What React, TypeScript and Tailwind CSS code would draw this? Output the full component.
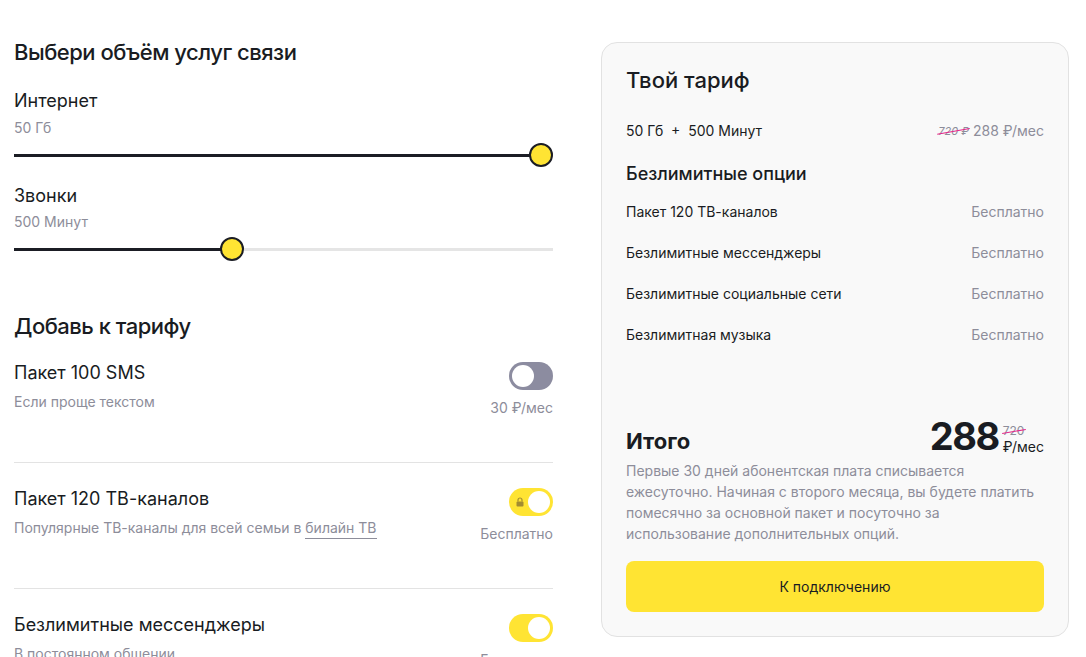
import React from "react";

const GRAY = "text-[#8d8d9a]";

function Slider({ pct }: { pct: number }) {
  return (
    <div className="relative h-6 w-full">
      <div className="absolute left-0 right-0 top-[11px] h-[3px] bg-[#e5e5e5]" />
      <div
        className="absolute left-0 top-[10.5px] h-[3px] bg-[#1b1d24]"
        style={{ width: `${pct}%` }}
      />
      <div
        className="absolute top-0 h-6 w-6 -translate-x-1/2 rounded-full border-2 border-[#1b1d24] bg-[#ffe433]"
        style={{ left: `${pct}%` }}
      />
    </div>
  );
}

function Lock() {
  return (
    <svg width="8" height="10" viewBox="0 0 8 10">
      <path d="M2 4.5V3a2 2 0 0 1 4 0v1.5" fill="none" stroke="#a38c30" strokeWidth="1.2" />
      <rect x="0.5" y="4.5" width="7" height="5" rx="1" fill="#a38c30" />
    </svg>
  );
}

function Toggle({ on, locked }: { on: boolean; locked?: boolean }) {
  return (
    <div
      className={`flex h-[28px] w-[44px] items-center rounded-full px-[3px] ${
        on ? "justify-end bg-[#ffe433]" : "justify-start bg-[#8c8ca0]"
      } relative`}
    >
      {locked && (
        <div className="absolute left-[7px] top-[9px] flex">
          <Lock />
        </div>
      )}
      <div className="h-[22px] w-[22px] rounded-full bg-white" />
    </div>
  );
}

function Item({
  title,
  sub,
  price,
  on,
  locked,
  last,
}: {
  title: string;
  sub: React.ReactNode;
  price: string;
  on: boolean;
  locked?: boolean;
  last?: boolean;
}) {
  return (
    <div className={`flex h-[126px] justify-between pt-[24px] ${last ? "" : "border-b border-[#e3e3e3]"}`}>
      <div className="flex flex-col">
        <div className="text-[18px] leading-[24px] text-[#191c22]">{title}</div>
        <div className={`mt-[7px] text-[14px] leading-[20px] ${GRAY}`}>{sub}</div>
      </div>
      <div className="flex flex-col items-end pt-[1px]">
        <Toggle on={on} locked={locked} />
        <div className={`mt-[8px] text-[14px] leading-[20px] ${GRAY}`}>{price}</div>
      </div>
    </div>
  );
}

function Strike({ children, className }: { children: React.ReactNode; className: string }) {
  return (
    <span className={`relative inline-block ${className}`}>
      {children}
      <span className="absolute left-[-1px] right-[-1px] top-1/2 h-[1px] -rotate-[10deg] bg-[#e3268a]" />
    </span>
  );
}

function OptRow({ name }: { name: string }) {
  return (
    <div className="flex justify-between text-[14px] leading-[20px]">
      <span className="text-[#191c22]">{name}</span>
      <span className={GRAY}>Бесплатно</span>
    </div>
  );
}

export default function App() {
  return (
    <div
      className="flex h-[657px] w-[1086px] overflow-hidden bg-white text-[#191c22]"
      style={{ fontFamily: "Inter, 'Noto Sans', sans-serif" }}
    >
      <div className="ml-[14px] flex w-[539px] flex-col pt-[38px]">
        <h2 className="text-[22px] font-medium leading-[28px] tracking-[-0.5px]">Выбери объём услуг связи</h2>
        <div className="mt-[23px] text-[18px] leading-[24px]">Интернет</div>
        <div className={`mt-[5px] text-[14px] leading-[20px] ${GRAY}`}>50 Гб</div>
        <div className="mt-[5px]">
          <Slider pct={97.8} />
        </div>
        <div className="mt-[17px] text-[18px] leading-[24px]">Звонки</div>
        <div className={`mt-[4px] text-[14px] leading-[20px] ${GRAY}`}>500 Минут</div>
        <div className="mt-[5px]">
          <Slider pct={40.4} />
        </div>
        <h2 className="mt-[51px] text-[22px] font-medium leading-[28px] tracking-[-0.5px]">Добавь к тарифу</h2>
        <div className="-mt-[3px] flex flex-col">
          <Item title="Пакет 100 SMS" sub="Если проще текстом" price="30 ₽/мес" on={false} />
          <Item
            title="Пакет 120 ТВ-каналов"
            sub={
              <span>
                Популярные ТВ-каналы для всей семьи в{" "}
                <span className="border-b border-[#8d8d9a] pb-[2px]">билайн ТВ</span>
              </span>
            }
            price="Бесплатно"
            on
            locked
          />
          <Item title="Безлимитные мессенджеры" sub="В постоянном общении" price="Бесплатно" on last />
        </div>
      </div>

      <div className="ml-[48px] mt-[42px] flex h-[595px] w-[468px] flex-col rounded-[16px] border border-[#e2e2e2] bg-[#f9f9f9] px-[24px] pb-[24px] pt-[23px]">
        <h3 className="text-[22px] font-medium leading-[28px]">Твой тариф</h3>
        <div className="mt-[27px] flex items-center justify-between text-[14px] leading-[20px]">
          <span className="whitespace-pre">50 Гб  +  500 Минут</span>
          <span className={`flex items-center ${GRAY}`}>
            <Strike className="text-[11px] italic">720 ₽</Strike>
            <span className="ml-[4px]">288 ₽/мес</span>
          </span>
        </div>
        <div className="mt-[21px] text-[18px] font-medium leading-[24px]">Безлимитные опции</div>
        <div className="mt-[16px] flex flex-col gap-[21px]">
          <OptRow name="Пакет 120 ТВ-каналов" />
          <OptRow name="Безлимитные мессенджеры" />
          <OptRow name="Безлимитные социальные сети" />
          <OptRow name="Безлимитная музыка" />
        </div>
        <div className="mt-auto flex flex-col">
          <div className="flex items-end justify-between">
            <span className="mb-[1px] text-[22px] font-bold leading-[28px]">Итого</span>
            <div className="flex items-end">
              <span className="text-[38px] font-bold leading-[40px] tracking-[-1.5px]">288</span>
              <div className="ml-[4px] flex flex-col items-start">
                <Strike className={`text-[12px] leading-[14px] ${GRAY}`}>720</Strike>
                <span className="text-[14px] leading-[18px]">₽/мес</span>
              </div>
            </div>
          </div>
          <p className={`mt-[4px] text-[14px] leading-[21px] ${GRAY}`}>
            Первые 30 дней абонентская плата списывается ежесуточно. Начиная с второго месяца, вы будете платить
            помесячно за основной пакет и посуточно за использование дополнительных опций.
          </p>
          <button className="mt-[17px] flex h-[51px] w-full items-center justify-center rounded-[8px] bg-[#ffe433] text-[14px] text-[#191c22]">
            К подключению
          </button>
        </div>
      </div>
    </div>
  );
}
